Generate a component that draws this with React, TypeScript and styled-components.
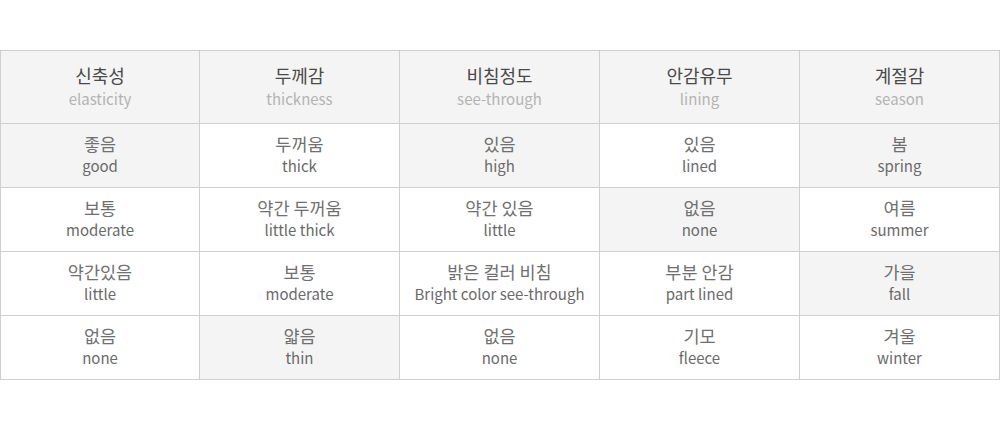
import React from "react";
import styled, { createGlobalStyle } from "styled-components";

const Global = createGlobalStyle`
  html, body { margin: 0; padding: 0; background: #fff; }
  body { padding-top: 50px; font-family: "Noto Sans CJK KR", "Noto Sans", sans-serif; }
`;

const Grid = styled.div`
  display: grid;
  grid-template-columns: 199px repeat(4, 1fr);
  grid-template-rows: 73px repeat(4, 64px);
  width: 1000px;
  box-sizing: border-box;
  border-top: 1px solid #cfcfcf;
  border-left: 1px solid #cfcfcf;
`;

const Cell = styled.div<{ $head?: boolean; $on?: boolean }>`
  box-sizing: border-box;
  border-right: 1px solid #cfcfcf;
  border-bottom: 1px solid #cfcfcf;
  background: ${(p) => (p.$head || p.$on ? "#f4f4f4" : "#fff")};
  display: flex;
  flex-direction: column;
  align-items: center;
  justify-content: center;
  gap: ${(p) => (p.$head ? "1px" : "0")};
  padding-bottom: 1px;
`;

const Ko = styled.span<{ $head?: boolean }>`
  font-size: ${(p) => (p.$head ? "18px" : "17.5px")};
  line-height: ${(p) => (p.$head ? "23px" : "22px")};
  font-weight: 400;
  color: ${(p) => (p.$head ? "#4a4a4a" : "#707070")};
`;

const En = styled.span<{ $head?: boolean }>`
  font-size: 15px;
  line-height: 22px;
  color: ${(p) => (p.$head ? "#b3b3b3" : "#6a6a6a")};
`;

const head = [
  ["신축성", "elasticity"],
  ["두께감", "thickness"],
  ["비침정도", "see-through"],
  ["안감유무", "lining"],
  ["계절감", "season"],
];

const rows: [string, string, boolean][][] = [
  [
    ["좋음", "good", true],
    ["두꺼움", "thick", false],
    ["있음", "high", true],
    ["있음", "lined", false],
    ["봄", "spring", true],
  ],
  [
    ["보통", "moderate", false],
    ["약간 두꺼움", "little thick", false],
    ["약간 있음", "little", false],
    ["없음", "none", true],
    ["여름", "summer", false],
  ],
  [
    ["약간있음", "little", false],
    ["보통", "moderate", false],
    ["밝은 컬러 비침", "Bright color see-through", false],
    ["부분 안감", "part lined", false],
    ["가을", "fall", true],
  ],
  [
    ["없음", "none", false],
    ["얇음", "thin", true],
    ["없음", "none", false],
    ["기모", "fleece", false],
    ["겨울", "winter", false],
  ],
];

export default function App() {
  return (
    <>
      <Global />
      <Grid>
        {head.map(([k, e]) => (
          <Cell $head key={k}>
            <Ko $head>{k}</Ko>
            <En $head>{e}</En>
          </Cell>
        ))}
        {rows.map((r, i) =>
          r.map(([k, e, on], j) => (
            <Cell $on={on} key={`${i}-${j}`}>
              <Ko>{k}</Ko>
              <En>{e}</En>
            </Cell>
          ))
        )}
      </Grid>
    </>
  );
}
